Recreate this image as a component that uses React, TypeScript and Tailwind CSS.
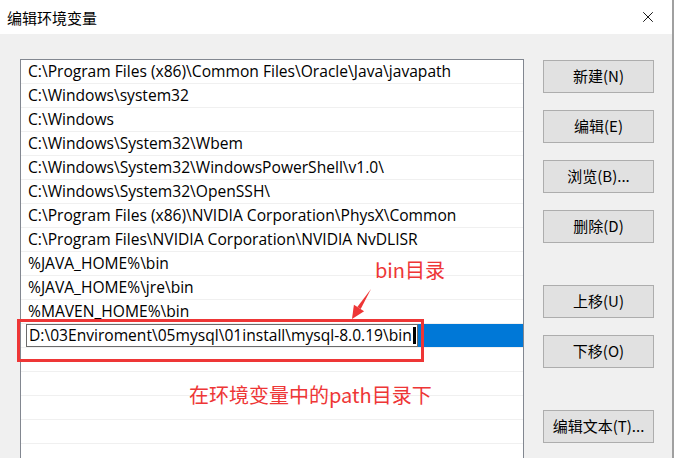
import { X } from "lucide-react";

const paths = [
    "C:\\Program Files (x86)\\Common Files\\Oracle\\Java\\javapath",
    "C:\\Windows\\system32",
    "C:\\Windows",
    "C:\\Windows\\System32\\Wbem",
    "C:\\Windows\\System32\\WindowsPowerShell\\v1.0\\",
    "C:\\Windows\\System32\\OpenSSH\\",
    "C:\\Program Files (x86)\\NVIDIA Corporation\\PhysX\\Common",
    "C:\\Program Files\\NVIDIA Corporation\\NVIDIA NvDLISR",
    "%JAVA_HOME%\\bin",
    "%JAVA_HOME%\\jre\\bin",
    "%MAVEN_HOME%\\bin",
];

const cjk = "font-['Noto_Sans_CJK_SC',sans-serif]";
const rowFont = "font-['Open_Sans',sans-serif] text-[15.6px]";

function Btn({ label, className = "" }: { label: string; className?: string }) {
    return (
        <button
            className={`flex h-[33px] w-[111px] shrink-0 items-center justify-center border border-[#adadad] bg-[#e1e1e1] text-[15px] text-black ${cjk} ${className}`}
        >
            {label}
        </button>
    );
}

export default function App() {
    return (
        <div className="relative flex h-[458px] w-[675px] overflow-hidden bg-white">
            <div className="flex h-[458px] w-[672px] shrink-0 flex-col overflow-hidden">
                {/* Title bar */}
                <div className="flex h-[34px] shrink-0 items-center justify-between bg-white pr-[15px] pl-[7px]">
                    <span className={`text-[15px] leading-none text-black ${cjk}`}>编辑环境变量</span>
                    <X size={18} strokeWidth={1.2} className="text-black" />
                </div>

                {/* Body */}
                <div className="flex min-h-0 flex-1 bg-[#f0f0f0] pt-[25px] pl-[20px]">
                    <div className="flex h-[420px] w-[504px] shrink-0 flex-col border border-[#828790] bg-white">
                        {paths.map((p) => (
                            <div
                                key={p}
                                className={`flex h-[24px] shrink-0 items-center border-b border-[#f0f0f0] pl-[7px] whitespace-nowrap text-black ${rowFont}`}
                            >
                                {p}
                            </div>
                        ))}
                        {/* Editing row */}
                        <div className="flex h-[24px] shrink-0 items-stretch border-b border-[#f0f0f0] pl-[5px]">
                            <div
                                className={`flex w-[392px] items-center border border-[#6b6b6b] bg-white pl-[2px] whitespace-nowrap text-black ${rowFont}`}
                            >
                                D:\03Enviroment\05mysql\01install\mysql-8.0.19\bin
                                <span className="ml-[1px] inline-block h-[17px] w-[3px] bg-black" />
                            </div>
                            <div className="flex-1 bg-[#0078d7]" />
                        </div>
                        {[0, 1, 2, 3, 4].map((i) => (
                            <div key={i} className="h-[24px] shrink-0 border-b border-[#f0f0f0]" />
                        ))}
                    </div>

                    <div className="ml-[19px] flex flex-col pt-[1px]">
                        <Btn label="新建(N)" />
                        <Btn label="编辑(E)" className="mt-[17px]" />
                        <Btn label="浏览(B)..." className="mt-[17px]" />
                        <Btn label="删除(D)" className="mt-[17px]" />
                        <Btn label="上移(U)" className="mt-[42px]" />
                        <Btn label="下移(O)" className="mt-[17px]" />
                        <Btn label="编辑文本(T)..." className="mt-[42px]" />
                    </div>
                </div>
            </div>
            <div className="w-[2px] shrink-0 bg-[#a0a0a0]" />
            <div className="flex-1 bg-white" />

            {/* Annotations */}
            <div className="absolute top-[319px] left-[17px] h-[43px] w-[407px] border-[3px] border-[#ee3636]" />
            <svg className="absolute top-0 left-0" width="675" height="458" viewBox="0 0 675 458">
                <polygon points="371,289 360.7,309.1 357.3,306.9" fill="#ee3636" />
                <polygon points="352,319 353.9,304.8 364.1,311.2" fill="#ee3636" />
            </svg>
            <span className={`absolute top-[260px] left-[375px] text-[20px] leading-none text-[#ee3636] ${cjk}`}>
                bin目录
            </span>
            <span className={`absolute top-[385px] left-[189px] text-[20px] leading-none text-[#ee3636] ${cjk}`}>
                在环境变量中的path目录下
            </span>
        </div>
    );
}
